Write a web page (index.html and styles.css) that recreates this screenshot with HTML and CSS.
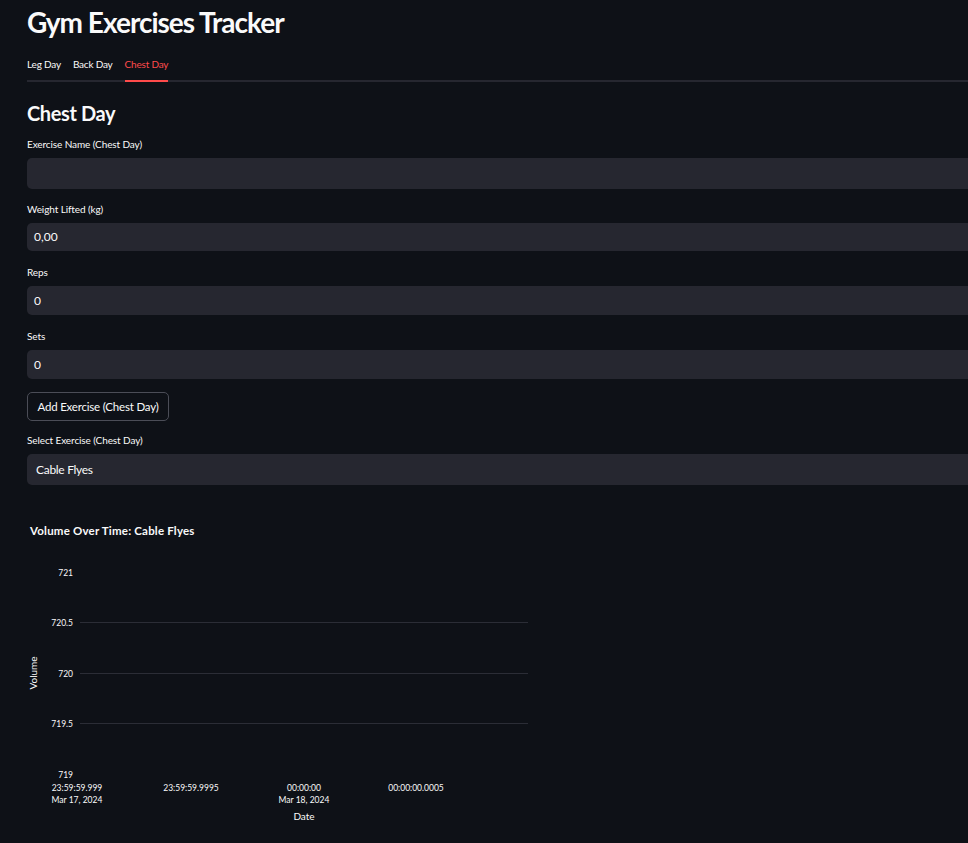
FILE: index.html
```html
<!DOCTYPE html>
<html lang="en">
<head>
<meta charset="utf-8">
<title>Gym Exercises Tracker</title>
<link rel="stylesheet" href="styles.css">
</head>
<body>
<main class="main">
  <h1 class="title">Gym Exercises Tracker</h1>
  <div class="tabs">
    <div class="tab">Leg Day</div>
    <div class="tab">Back Day</div>
    <div class="tab active">Chest Day</div>
  </div>
  <h2 class="subtitle">Chest Day</h2>
  <div class="form">
    <div class="field">
      <label class="label">Exercise Name (Chest Day)</label>
      <div class="input tall"></div>
    </div>
    <div class="field">
      <label class="label">Weight Lifted (kg)</label>
      <div class="input short">0,00</div>
    </div>
    <div class="field spaced">
      <label class="label">Reps</label>
      <div class="input">0</div>
    </div>
    <div class="field spaced">
      <label class="label">Sets</label>
      <div class="input">0</div>
    </div>
    <div class="btn-row"><button class="btn">Add Exercise (Chest Day)</button></div>
    <div class="field tight">
      <label class="label">Select Exercise (Chest Day)</label>
      <div class="input tall select">Cable Flyes</div>
    </div>
  </div>
  <svg class="chart" width="560" height="343" viewBox="0 0 560 343">
    <text class="chart-title" x="30" y="35">Volume Over Time: Cable Flyes</text>
    <g class="grid">
      <line x1="80" y1="122.5" x2="528" y2="122.5"/>
      <line x1="80" y1="173.5" x2="528" y2="173.5"/>
      <line x1="80" y1="223.5" x2="528" y2="223.5"/>
    </g>
    <g class="ylab">
      <text x="73" y="76">721</text>
      <text x="73" y="126">720.5</text>
      <text x="73" y="177">720</text>
      <text x="73" y="227">719.5</text>
      <text x="73" y="278">719</text>
    </g>
    <text class="axis-title" transform="translate(37 173) rotate(-90)">Volume</text>
    <g class="xlab">
      <text x="77" y="291">23:59:59.999</text>
      <text x="77" y="303">Mar 17, 2024</text>
      <text x="191" y="291">23:59:59.9995</text>
      <text x="304" y="291">00:00:00</text>
      <text x="304" y="303">Mar 18, 2024</text>
      <text x="416" y="291">00:00:00.0005</text>
    </g>
    <text class="axis-title" x="304" y="320">Date</text>
  </svg>
</main>
</body>
</html>
```

FILE: styles.css
```css
* { box-sizing: border-box; }
html, body {
  margin: 0;
  background: #0e1117;
  color: #fafafa;
  font-family: "Source Sans Pro", Lato, "Noto Sans", sans-serif;
  overflow: hidden;
}
.main {
  padding-left: 27px;
  width: 1100px;
}
.title {
  margin: 4px 0 0;
  font-size: 28px;
  line-height: 36px;
  font-weight: 700;
  letter-spacing: -1px;
}
.tabs {
  display: flex;
  gap: 12px;
  border-bottom: 2px solid #262730;
  height: 42px;
}
.tab {
  font-size: 10px;
  letter-spacing: -0.2px;
  line-height: 16px;
  padding-top: 16px;
  height: 42px;
  margin-bottom: -2px;
  border-bottom: 2px solid transparent;
}
.tab.active {
  color: #ff4b4b;
  border-bottom-color: #ff4b4b;
}
.subtitle {
  margin: 17px 0 0;
  font-size: 20px;
  line-height: 28px;
  font-weight: 700;
  letter-spacing: -0.4px;
}
.form {
  margin-top: 10px;
  display: flex;
  flex-direction: column;
  gap: 13px;
}
.field {
  display: flex;
  flex-direction: column;
  gap: 7px;
}
.field.spaced { margin-top: 1px; }
.field.tight { margin-top: -1px; }
.label {
  font-size: 10px;
  line-height: 14px;
  letter-spacing: -0.1px;
}
.input {
  background: #262730;
  border-radius: 5px;
  height: 29px;
  font-size: 12px;
  line-height: 29px;
  padding-left: 7px;
}
.input.tall { height: 31px; line-height: 31px; }
.input.short { height: 28px; line-height: 28px; }
.input.select { padding-left: 9px; font-size: 12px; letter-spacing: -0.3px; }
.btn-row { display: flex; }
.btn {
  height: 29px;
  width: 142px;
  background: #0e1117;
  color: #fafafa;
  border: 1px solid #4b4d57;
  border-radius: 5px;
  font-family: inherit;
  font-size: 11.5px;
  letter-spacing: -0.2px;
  padding: 0;
}
.chart {
  display: block;
  margin: 15px 0 0 -27px;
}
.chart text {
  fill: #fafafa;
  font-family: "Source Sans Pro", Lato, "Noto Sans", sans-serif;
}
.chart-title { font-size: 11.5px; font-weight: 700; letter-spacing: 0.2px; }
.grid line { stroke: #2b2d36; stroke-width: 1; }
.ylab text { font-size: 8.5px; text-anchor: end; }
.xlab text { font-size: 8.5px; text-anchor: middle; }
.axis-title { font-size: 10px; text-anchor: middle; }
```
